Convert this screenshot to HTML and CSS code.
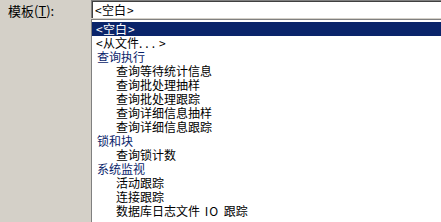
FILE: index.html
```html
<!DOCTYPE html>
<html lang="zh-CN">
<head>
    <meta charset="UTF-8">
    <title>模板</title>
    <link rel="stylesheet" href="styles.css">
</head>
<body>
    <div class="row">
        <label class="label">模板(<u>T</u>):</label>
        <div class="combo">
            <div class="edit"><span class="br">&lt;</span>空白<span class="br">&gt;</span></div>
            <ul class="list">
                <li class="item selected"><span class="br">&lt;</span>空白<span class="br">&gt;</span></li>
                <li class="item"><span class="br">&lt;</span>从文件<span class="dots">...</span><span class="br">&gt;</span></li>
                <li class="item group">查询执行</li>
                <li class="item child">查询等待统计信息</li>
                <li class="item child">查询批处理抽样</li>
                <li class="item child">查询批处理跟踪</li>
                <li class="item child">查询详细信息抽样</li>
                <li class="item child">查询详细信息跟踪</li>
                <li class="item group">锁和块</li>
                <li class="item child">查询锁计数</li>
                <li class="item group">系统监视</li>
                <li class="item child">活动跟踪</li>
                <li class="item child">连接跟踪</li>
                <li class="item child">数据库日志文件 <span class="io">IO</span> 跟踪</li>
            </ul>
        </div>
    </div>
</body>
</html>
```

FILE: styles.css
```css
body {
    margin: 0;
    background-color: #d4d0c8;
    color: #000000;
    font-family: "Noto Sans CJK SC", "DejaVu Sans", sans-serif;
    font-size: 12px;
    overflow: hidden;
}

.row {
    display: flex;
    height: 222px;
}

.label {
    width: 83px;
    padding: 3px 0 0 8px;
    line-height: 16px;
    font-size: 13px;
}

.combo {
    flex: 1;
    display: flex;
    flex-direction: column;
    gap: 1px;
}

.edit {
    height: 17px;
    line-height: 17px;
    padding-left: 2px;
    background-color: #ffffff;
    border-top: 1px solid #808080;
    border-left: 1px solid #808080;
    box-shadow: inset 1px 1px #404040;
}

.list {
    flex: 1;
    margin: 0;
    padding: 2px 0 0 0;
    list-style: none;
    background-color: #ffffff;
    border-top: 1px solid #808080;
    border-left: 1px solid #808080;
}

.item {
    height: 14px;
    line-height: 14px;
    padding-left: 3px;
    white-space: nowrap;
}

.br {
    display: inline-block;
    width: 6px;
    text-align: center;
    margin: 0 1px;
}

.dots {
    letter-spacing: 3px;
}

.io {
    letter-spacing: 1px;
    margin: 0 2px;
}

.selected {
    background-color: #0a246a;
    color: #ffffff;
}

.group {
    color: #0a246a;
    padding-left: 5px;
}

.child {
    padding-left: 24px;
}
```
